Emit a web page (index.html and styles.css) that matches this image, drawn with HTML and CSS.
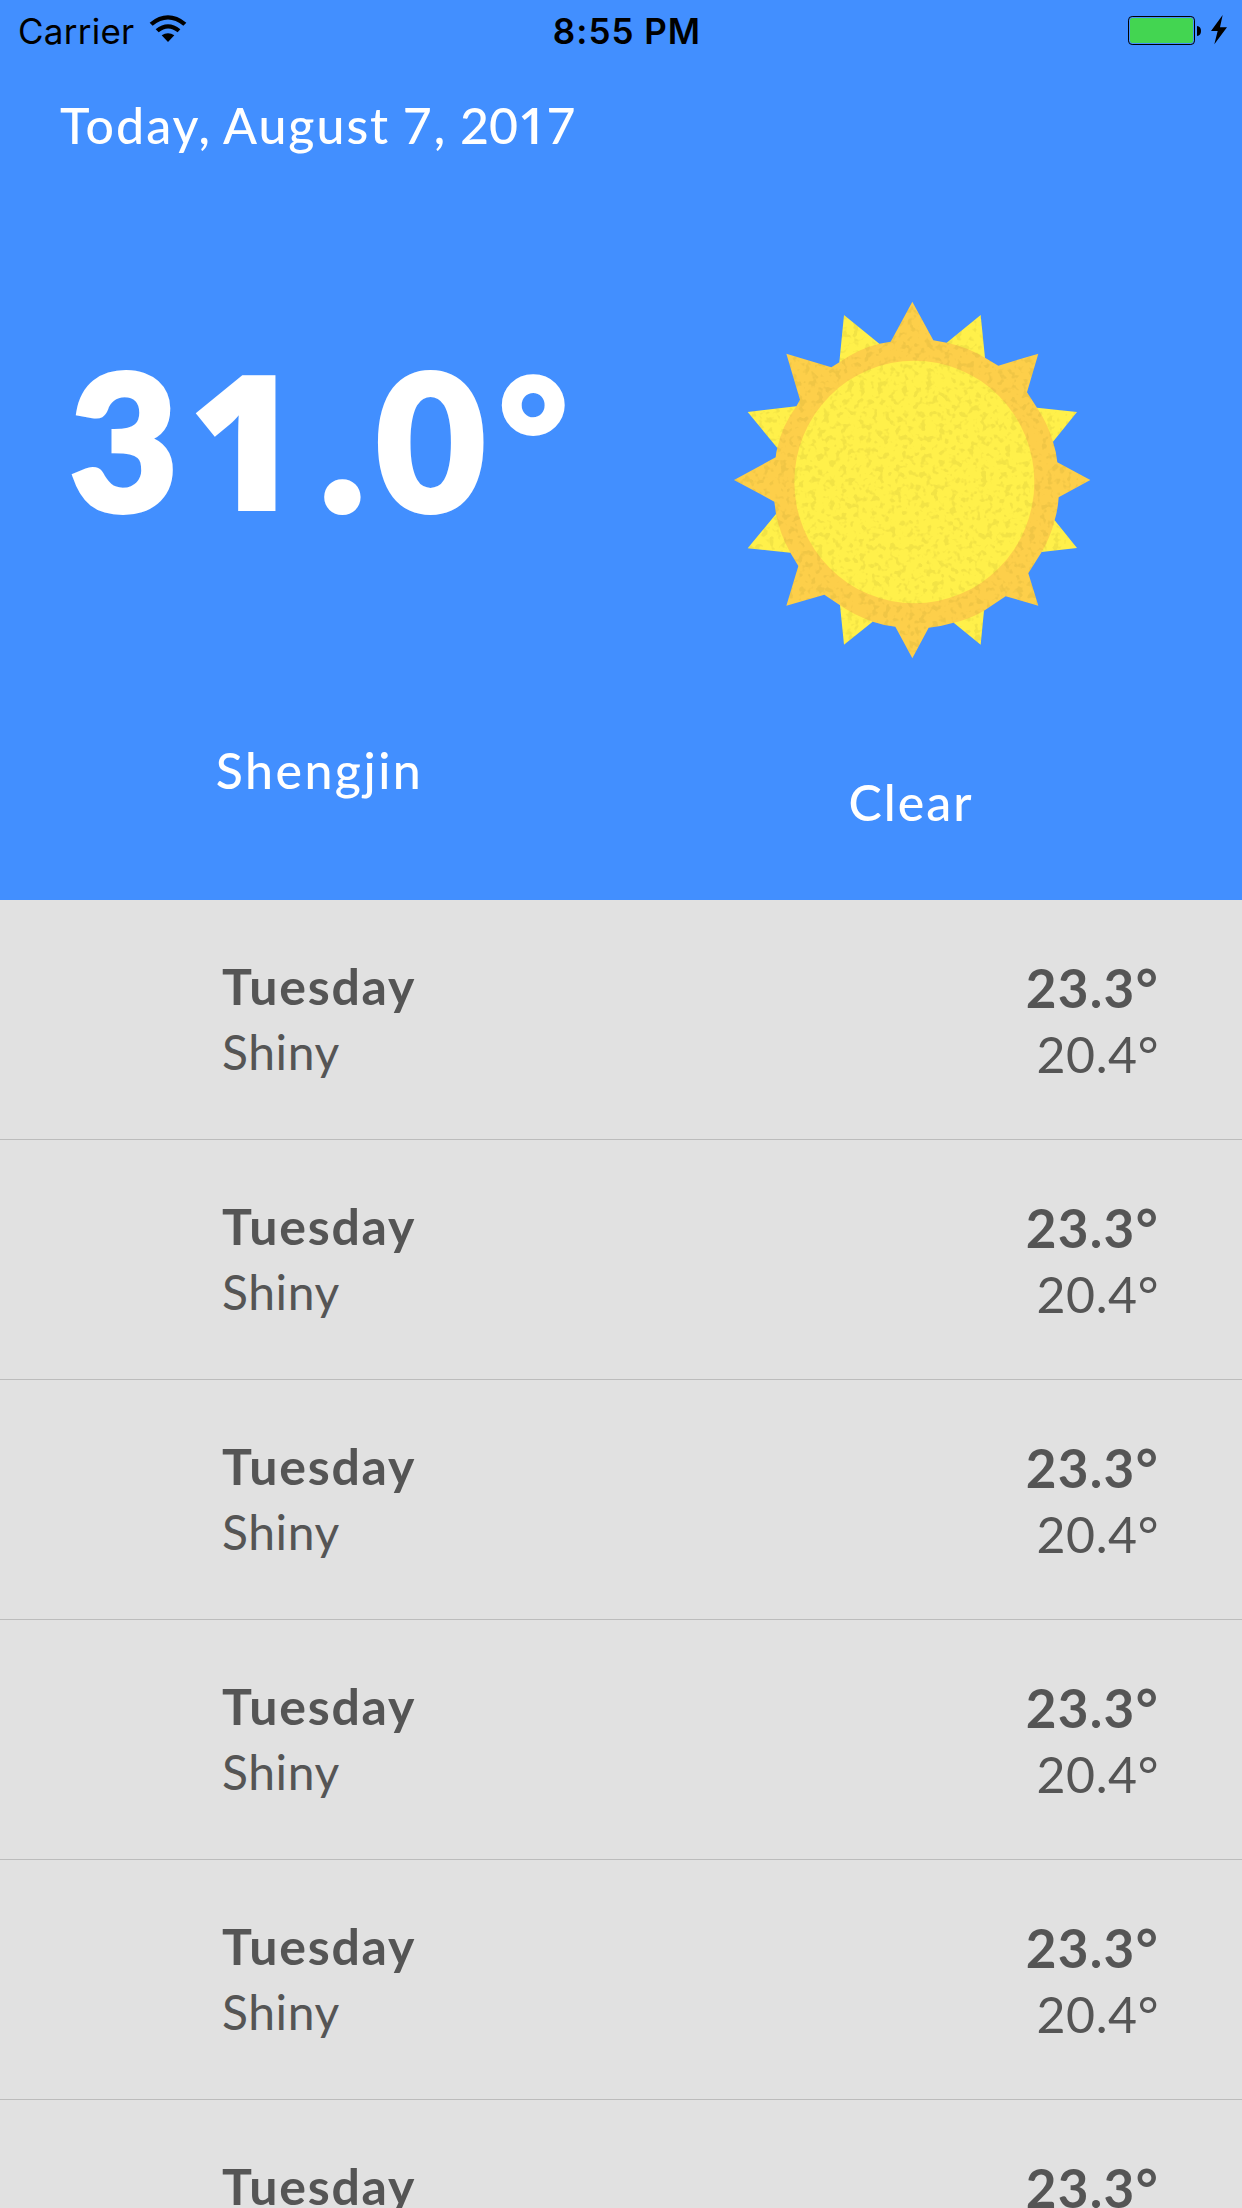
FILE: index.html
```html
<!DOCTYPE html>
<html lang="en">
<head>
<meta charset="utf-8">
<title>Weather</title>
<link rel="stylesheet" href="styles.css">
</head>
<body>
<main class="screen">
  <header class="today">
    <div class="status">
      <div class="carrier"><span>Carrier</span>
        <svg class="wifi" viewBox="0 0 114 84"><path d="M2 23Q57-21 112 23L103 32Q57-5 11 32Z"/><path d="M20 43Q57 13 94 43L86 52Q57 29 29 52Z"/><path d="M38 61Q57 48 76 61L57 81Z"/></svg>
      </div>
      <time class="clock">8:55 PM</time>
      <svg class="battery" viewBox="0 0 396 180"><rect x="55.5" y="49.5" width="198" height="84" rx="11" fill="none" stroke="#000" stroke-width="3"/><rect x="60" y="54" width="189" height="75" rx="7" fill="#43d551"/><path d="M261 78Q273 79 273 93Q273 107 261 108Z"/><path d="M338 45L303 93H323L313 133L351 82H330Z"/></svg>
    </div>
    <h1 class="date">Today, August 7, <span class="year">20<span class="plain-one">1</span>7</span></h1>
    <div class="conditions">
      <section class="now">
        <p class="temp">3<span class="plain-one">1</span><span class="fraction">.0<span class="degree">°</span></span></p>
        <p class="place">Shengjin</p>
      </section>
      <section class="sky">
        <svg class="sun" viewBox="0 0 1140 1140">
          <defs>
            <filter id="grain" x="0" y="0" width="1" height="1" color-interpolation-filters="sRGB">
              <feTurbulence type="fractalNoise" baseFrequency="0.055" numOctaves="2" seed="4"/>
              <feColorMatrix values="0 0 0 0 .60  0 0 0 0 .54  0 0 0 0 .15  0 0 0 7 -3.7" result="noise"/>
              <feComponentTransfer><feFuncA type="linear" slope=".13"/></feComponentTransfer>
              <feComposite in2="SourceAlpha" operator="in" result="specks"/>
              <feMerge><feMergeNode in="SourceGraphic"/><feMergeNode in="specks"/></feMerge>
            </filter>
          </defs>
          <g filter="url(#grain)">
            <path fill="#fff04a" d="M372 75L478 161L420 300L358 217ZM782 75L680 158L720 300L795 203ZM83 366L229 349L300 420L172 474ZM1071 366L951 353L860 420L999 455ZM83 775L168 672L300 700L211 788ZM1071 774L1004 691L860 720L965 786ZM372 1064L458 995L430 860L360 946ZM782 1064L701 998L720 860L792 962Z"/>
            <path fill="#fdcf4a" d="M577 35L640 151L680 158Q740 170 795 203L835 227L955 191L921 307L951 353Q983 400 999 455Q1009 485 1012 517L1111 570L1016 622Q1014 657 1004 691Q990 745 965 786L925 850L955 947L857 919L792 962Q750 987 701 998Q664 1009 626 1013L577 1105L526 1010Q490 1006 458 995Q405 977 360 946L313 914L199 947L235 828L211 788Q180 733 168 672L163 635L42 570L167 502Q168 487 172 474Q185 410 229 349L240 329L199 191L334 232L358 217Q415 176 478 161L512 155Z"/>
            <ellipse cx="583" cy="576" rx="360" ry="364" fill="#fff04a"/>
          </g>
        </svg>
        <p class="summary">Clear</p>
      </section>
    </div>
  </header>
  <ul class="forecast">
    <li class="day"><div><p class="name">Tuesday</p><p class="note">Shiny</p></div><div class="range"><p class="high">23.3°</p><p class="low">20.4°</p></div></li>
    <li class="day"><div><p class="name">Tuesday</p><p class="note">Shiny</p></div><div class="range"><p class="high">23.3°</p><p class="low">20.4°</p></div></li>
    <li class="day"><div><p class="name">Tuesday</p><p class="note">Shiny</p></div><div class="range"><p class="high">23.3°</p><p class="low">20.4°</p></div></li>
    <li class="day"><div><p class="name">Tuesday</p><p class="note">Shiny</p></div><div class="range"><p class="high">23.3°</p><p class="low">20.4°</p></div></li>
    <li class="day"><div><p class="name">Tuesday</p><p class="note">Shiny</p></div><div class="range"><p class="high">23.3°</p><p class="low">20.4°</p></div></li>
    <li class="day"><div><p class="name">Tuesday</p><p class="note">Shiny</p></div><div class="range"><p class="high">23.3°</p><p class="low">20.4°</p></div></li>
  </ul>
</main>
</body>
</html>
```
FILE: styles.css
```css
* { box-sizing: border-box; margin: 0; padding: 0; }
body { background: #e1e1e1; font-family: Lato, "Open Sans", sans-serif; }
.screen { height: 2208px; overflow: hidden; }

.today { display: flex; flex-direction: column; height: 900px; background: #428fff; color: #fff; }

.status { display: grid; grid-template-columns: 1fr auto 1fr; height: 60px; color: #000; font: 35px/42px Inter, sans-serif; }
.carrier { display: flex; padding: 10px 0 0 18px; letter-spacing: .25px; }
.wifi { width: 38px; height: 28px; margin: 5px 0 0 15px; }
.clock { padding-top: 10px; margin-left: 12px; font-weight: 600; letter-spacing: 1px; }
.battery { width: 132px; height: 60px; justify-self: end; }

.date { margin: 35px 0 0 60px; font-size: 50px; line-height: 60px; font-weight: 500; letter-spacing: 2px; word-spacing: -2px; white-space: nowrap; }
.year { letter-spacing: 0; }
/* The "1" is set without a foot serif. */
.plain-one { font-family: "Open Sans", sans-serif; line-height: 1; }
.year .plain-one { font-weight: 600; }

.conditions { display: grid; grid-template-columns: 636px 548px; }
.now { padding-top: 155px; text-align: center; }
.temp { height: 259px; padding-left: 70px; font-size: 186px; line-height: 259px; font-weight: 900; text-align: left; white-space: nowrap; -webkit-text-stroke: 6px #fff; }
.temp .plain-one { margin-left: 10px; font-size: 190px; font-weight: 800; letter-spacing: 21px; -webkit-text-stroke: 0; }
.fraction { letter-spacing: 12.2px; }
.degree { margin-left: 2px; font-size: 166px; line-height: 1; vertical-align: 13px; -webkit-text-stroke-width: 4px; }
.place { margin-top: 171px; padding-left: 3px; font-size: 50px; line-height: 60px; font-weight: 500; letter-spacing: 2.5px; }
.sky { display: flex; flex-direction: column; align-items: center; padding-top: 135px; }
.sun { width: 380px; height: 380px; }
.summary { margin-top: 102px; padding-left: 2px; font-size: 50px; line-height: 60px; font-weight: 500; letter-spacing: 2px; }

.forecast { list-style: none; color: #555; }
.day { display: flex; justify-content: space-between; height: 240px; padding: 56px 83px 0 222px; border-bottom: 1px solid #bcbcbc; }
.name { font-size: 50px; line-height: 60px; font-weight: 700; letter-spacing: 1.8px; }
.note { margin-top: 7px; font-size: 48px; line-height: 57px; font-weight: 400; letter-spacing: .6px; }
.range { text-align: right; }
.high { font-size: 53px; line-height: 63px; font-weight: 700; letter-spacing: 1.3px; }
.low { margin-top: 5px; font-size: 50px; line-height: 60px; font-weight: 400; letter-spacing: .6px; }
```
